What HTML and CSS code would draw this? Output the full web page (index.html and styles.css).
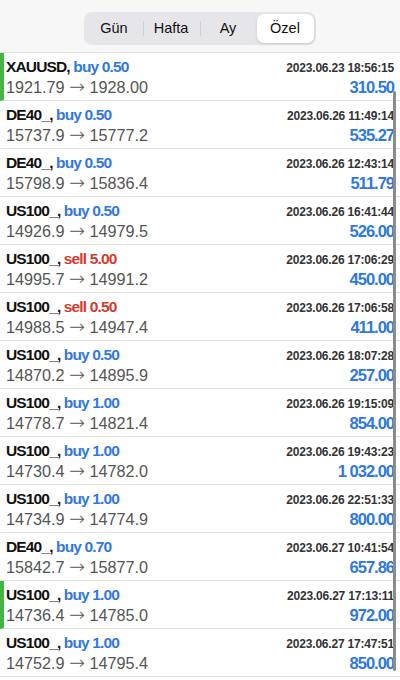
FILE: index.html
```html
<!DOCTYPE html>
<html lang="tr">
<head>
    <meta charset="UTF-8">
    <meta name="viewport" content="width=device-width, initial-scale=1.0">
    <title>Geçmiş</title>
    <link rel="stylesheet" href="styles.css">
</head>
<body>
    <div class="top-bar">
        <div class="segmented">
            <span class="seg">Gün</span>
            <span class="seg">Hafta</span>
            <span class="seg">Ay</span>
            <span class="seg active">Özel</span>
        </div>
    </div>

    <div class="deals">
        <div class="deal marked">
            <div class="line"><span class="sym">XAUUSD, <b class="buy">buy 0.50</b></span><span class="time">2023.06.23 18:56:15</span></div>
            <div class="line"><span class="price">1921.79 <span class="arrow">→</span> 1928.00</span><span class="profit">310.50</span></div>
        </div>
        <div class="deal">
            <div class="line"><span class="sym">DE40_, <b class="buy">buy 0.50</b></span><span class="time">2023.06.26 11:49:14</span></div>
            <div class="line"><span class="price">15737.9 <span class="arrow">→</span> 15777.2</span><span class="profit">535.27</span></div>
        </div>
        <div class="deal">
            <div class="line"><span class="sym">DE40_, <b class="buy">buy 0.50</b></span><span class="time">2023.06.26 12:43:14</span></div>
            <div class="line"><span class="price">15798.9 <span class="arrow">→</span> 15836.4</span><span class="profit">511.79</span></div>
        </div>
        <div class="deal">
            <div class="line"><span class="sym">US100_, <b class="buy">buy 0.50</b></span><span class="time">2023.06.26 16:41:44</span></div>
            <div class="line"><span class="price">14926.9 <span class="arrow">→</span> 14979.5</span><span class="profit">526.00</span></div>
        </div>
        <div class="deal">
            <div class="line"><span class="sym">US100_, <b class="sell">sell 5.00</b></span><span class="time">2023.06.26 17:06:29</span></div>
            <div class="line"><span class="price">14995.7 <span class="arrow">→</span> 14991.2</span><span class="profit">450.00</span></div>
        </div>
        <div class="deal">
            <div class="line"><span class="sym">US100_, <b class="sell">sell 0.50</b></span><span class="time">2023.06.26 17:06:58</span></div>
            <div class="line"><span class="price">14988.5 <span class="arrow">→</span> 14947.4</span><span class="profit">411.00</span></div>
        </div>
        <div class="deal">
            <div class="line"><span class="sym">US100_, <b class="buy">buy 0.50</b></span><span class="time">2023.06.26 18:07:28</span></div>
            <div class="line"><span class="price">14870.2 <span class="arrow">→</span> 14895.9</span><span class="profit">257.00</span></div>
        </div>
        <div class="deal">
            <div class="line"><span class="sym">US100_, <b class="buy">buy 1.00</b></span><span class="time">2023.06.26 19:15:09</span></div>
            <div class="line"><span class="price">14778.7 <span class="arrow">→</span> 14821.4</span><span class="profit">854.00</span></div>
        </div>
        <div class="deal">
            <div class="line"><span class="sym">US100_, <b class="buy">buy 1.00</b></span><span class="time">2023.06.26 19:43:23</span></div>
            <div class="line"><span class="price">14730.4 <span class="arrow">→</span> 14782.0</span><span class="profit">1 032.00</span></div>
        </div>
        <div class="deal">
            <div class="line"><span class="sym">US100_, <b class="buy">buy 1.00</b></span><span class="time">2023.06.26 22:51:33</span></div>
            <div class="line"><span class="price">14734.9 <span class="arrow">→</span> 14774.9</span><span class="profit">800.00</span></div>
        </div>
        <div class="deal">
            <div class="line"><span class="sym">DE40_, <b class="buy">buy 0.70</b></span><span class="time">2023.06.27 10:41:54</span></div>
            <div class="line"><span class="price">15842.7 <span class="arrow">→</span> 15877.0</span><span class="profit">657.86</span></div>
        </div>
        <div class="deal marked">
            <div class="line"><span class="sym">US100_, <b class="buy">buy 1.00</b></span><span class="time">2023.06.27 17:13:11</span></div>
            <div class="line"><span class="price">14736.4 <span class="arrow">→</span> 14785.0</span><span class="profit">972.00</span></div>
        </div>
        <div class="deal">
            <div class="line"><span class="sym">US100_, <b class="buy">buy 1.00</b></span><span class="time">2023.06.27 17:47:51</span></div>
            <div class="line"><span class="price">14752.9 <span class="arrow">→</span> 14795.4</span><span class="profit">850.00</span></div>
        </div>
        <div class="scroll-thumb"></div>
    </div>
</body>
</html>
```

FILE: styles.css
```css
/* Global */
* {
    margin: 0;
    padding: 0;
    box-sizing: border-box;
}
body {
    font-family: 'Liberation Sans', Arial, sans-serif;
    background: #ffffff;
    width: 400px;
    height: 680px;
    overflow: hidden;
}

/* Period switcher */
.top-bar {
    height: 53px;
    background: #f7f7f8;
    border-bottom: 1px solid #e2e2e4;
    display: flex;
    justify-content: center;
    padding-top: 12px;
}
.segmented {
    display: flex;
    align-items: center;
    height: 33px;
    padding: 2px;
    background: #e6e6ea;
    border-radius: 8px;
    margin-left: -1px;
}
.seg {
    position: relative;
    width: 57px;
    height: 29px;
    line-height: 29px;
    text-align: center;
    font-size: 14.5px;
    color: #111;
}
.seg + .seg::before {
    content: "";
    position: absolute;
    left: 0;
    top: 7px;
    height: 15px;
    border-left: 1px solid #cfcfd4;
}
.seg.active {
    background: #fff;
    border-radius: 7px;
    box-shadow: 0 1px 3px rgba(0, 0, 0, 0.12);
}
.seg.active::before,
.seg.active + .seg::before {
    display: none;
}

/* Deal list */
.deals {
    position: relative;
}
.deal {
    height: 48px;
    padding: 4px 6px 0 6px;
    border-bottom: 1px solid #e0e0e0;
}
.deal.marked {
    border-left: 4px solid #42b545;
    padding-left: 2px;
}
.line {
    display: flex;
    justify-content: space-between;
    align-items: baseline;
}
.sym {
    font-size: 15.5px;
    font-weight: bold;
    color: #111;
    letter-spacing: -0.85px;
    line-height: 19px;
}
.buy {
    color: #2f78e0;
}
.sell {
    color: #d23b30;
}
.time {
    font-size: 12px;
    font-weight: bold;
    color: #333;
    letter-spacing: -0.2px;
}
.price {
    font-size: 16.2px;
    color: #555;
    line-height: 22px;
}
.arrow {
    font-family: 'DejaVu Sans', sans-serif;
    font-size: 19px;
    line-height: 1;
    font-weight: 200;
}
.profit {
    font-size: 16.5px;
    font-weight: bold;
    color: #2f78e0;
    letter-spacing: -1px;
}

.scroll-thumb {
    position: absolute;
    left: 393px;
    top: 38px;
    width: 3px;
    height: 580px;
    background: #8c8c8c;
    border-radius: 2px;
}
```
